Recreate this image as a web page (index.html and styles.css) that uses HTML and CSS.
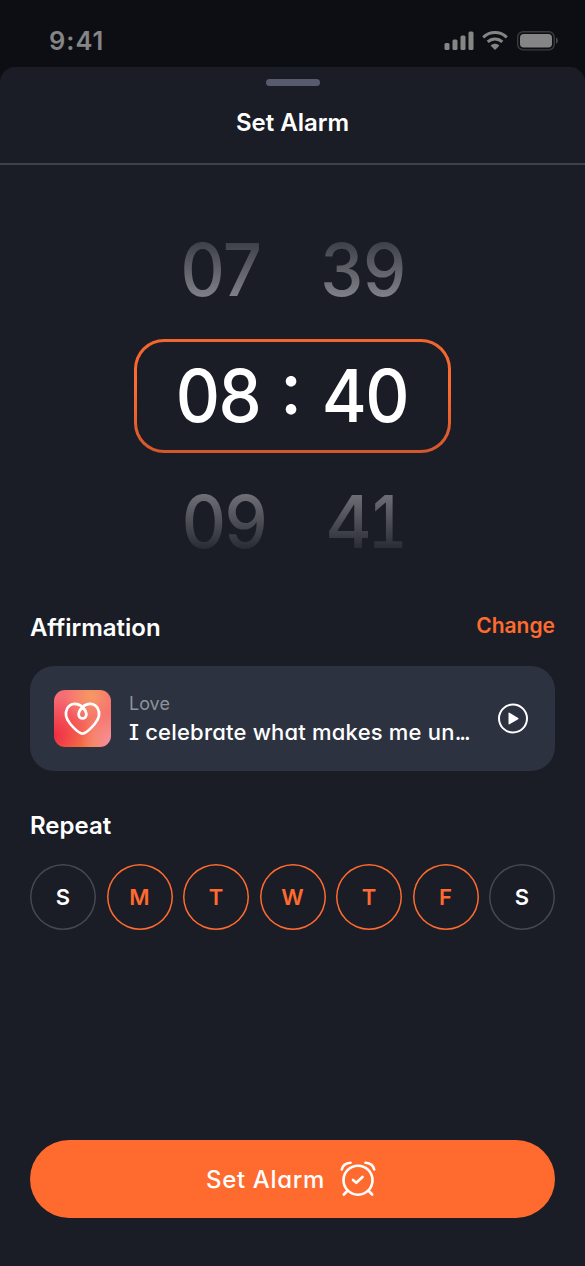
FILE: index.html
```html
<!DOCTYPE html>
<html lang="en">
<head>
<meta charset="utf-8">
<title>Set Alarm</title>
<link rel="stylesheet" href="styles.css">
</head>
<body>
<div class="phone">
  <header class="status">
    <span class="clock">9:41</span>
    <svg class="status-icons" width="116" height="22" viewBox="0 0 116 22">
      <g fill="#858585">
        <rect x="1.5" y="13" width="5" height="7" rx="1.5"/>
        <rect x="9.5" y="9.5" width="5" height="10.5" rx="1.5"/>
        <rect x="17.5" y="5.5" width="5" height="14.5" rx="1.5"/>
        <rect x="25.5" y="1.5" width="5" height="18.5" rx="1.5"/>
        <path d="M52 13.8c1.500 0 2.900.5 4 1.500.3.200.3.500 0 .8l-3.500 3.500c-.3.300-.7.300-1 0L48 16.100c-.3-.3-.3-.6 0-.8 1.100-1 2.500-1.500 4-1.500z"/>
      </g>
      <g fill="none" stroke="#858585" stroke-width="3">
        <path d="M40.200 7.300a17 17 0 0 1 23.600 0"/>
        <path d="M44.700 11.900a10.500 10.500 0 0 1 14.600 0"/>
      </g>
      <rect x="74.700" y="1.700" width="36.500" height="18.200" rx="5.500" fill="none" stroke="#3a3b3f" stroke-width="1.400"/>
      <rect x="77" y="4" width="32" height="13.500" rx="3.800" fill="#858585"/>
      <path d="M113 7.600c2.600 1.200 2.600 5 0 6.200z" fill="#45464a"/>
    </svg>
  </header>
  <main class="sheet">
    <div class="sheet-head">
      <div class="grabber"></div>
      <h1 class="title">Set Alarm</h1>
    </div>
    <section class="picker">
      <div class="row above"><span class="num">07</span><span class="colon"></span><span class="num">39</span></div>
      <div class="row selected"><span class="num">08</span><span class="colon">:</span><span class="num">40</span></div>
      <div class="row below"><span class="num">09</span><span class="colon"></span><span class="pair"><span class="num">4</span><span class="num footed">1</span></span></div>
    </section>
    <section class="affirmation">
      <div class="section-head"><h2>Affirmation</h2><a class="change">Change</a></div>
      <div class="card">
        <div class="cover">
          <svg width="57" height="57" viewBox="0 0 57 57" fill="none" stroke="#fff" stroke-width="2.700" stroke-linecap="round">
            <path d="M28.500 17C24 12.500 16.500 12.700 13.400 18.200C10.500 23.500 12.500 29.500 16.300 34C20 38.400 24 42 27 43.300Q28.500 44 30 43.300C33 42 37 38.400 40.700 34C44.500 29.500 46.500 23.500 43.600 18.200C40.500 12.700 33 12.500 28.500 17C25.500 20.300 24.200 23 24.800 25.500C25.800 29.400 31.200 29.400 32.200 25.500C32.800 23 31.500 20.300 28.500 17Z"/>
          </svg>
        </div>
        <div class="text"><span class="genre">Love</span><span class="quote">I celebrate what makes me un<span class="dots">...</span></span></div>
        <svg class="play" width="32" height="32" viewBox="0 0 32 32"><circle cx="16" cy="15.500" r="14" fill="none" stroke="#fff" stroke-width="2"/><path d="M11.500 10.200v10.600q0 1 1 .5l8.700-5q1-.7 0-1.400l-8.700-5.200q-1-.5-1 .5z" fill="#fff"/></svg>
      </div>
    </section>
    <section class="repeat">
      <h2>Repeat</h2>
      <div class="days">
        <span class="day">S</span><span class="day on">M</span><span class="day on">T</span><span class="day on">W</span><span class="day on">T</span><span class="day on">F</span><span class="day">S</span>
      </div>
    </section>
    <div class="cta"><span>Set Alarm</span>
      <svg width="36" height="36" viewBox="0 0 36 36" fill="none" stroke="#fff" stroke-width="2.600" stroke-linecap="round" stroke-linejoin="round">
        <circle cx="18" cy="19.200" r="14.500"/><path d="M13 19l3.300 2.800 6.200-5.800M6.800 30.500l-3 3M29.200 30.500l3 3M1.800 8.500Q3 2.500 10.500 1.800M34.200 8.500Q33 2.500 25.500 1.800"/>
      </svg>
    </div>
  </main>
</div>
</body>
</html>
```
FILE: styles.css
```css
* { box-sizing: border-box; }
body { margin: 0; background: #0d0e13; color: #fff; font-family: Inter, "Liberation Sans", sans-serif; }
h1, h2 { margin: 0; font-size: 24px; line-height: 32px; font-weight: 600; }
.phone { height: 1266px; display: flex; flex-direction: column; overflow: hidden; }
.status { height: 67px; padding: 14px 26px 0 49px; display: flex; align-items: center; justify-content: space-between; flex: none; }
.clock { font-size: 25.500px; font-weight: 600; letter-spacing: 1px; color: #858585; }
.sheet { flex: 1; background: #1a1c26; border-radius: 15px 15px 0 0; display: flex; flex-direction: column; }
.sheet-head { height: 98px; flex: none; border-bottom: 2px solid #3e424f; display: flex; flex-direction: column; align-items: center; padding-top: 12px; }
.grabber { width: 54px; height: 7px; border-radius: 4px; background: #575b6d; }
.title { margin-top: 21px; }
.picker { height: 447px; padding-top: 48px; display: flex; flex-direction: column; align-items: center; }
.row { width: 317px; height: 114px; margin-bottom: 12px; display: grid; grid-template-columns: 96px 51px 96px; justify-content: center; align-items: center; text-align: center; font-size: 73px; line-height: 90px; font-weight: 500; letter-spacing: -1.500px; }
.num { transform: scaleX(.94); }
.selected { padding-right: 3px; background: linear-gradient(#1a1c26, #1a1c26) padding-box, linear-gradient(#f2652f, #ff6b2f 40%, #d3562c) border-box; border: 3px solid transparent; border-radius: 30px; }
.colon { font-feature-settings: "case"; letter-spacing: 0; }
.above { grid-template-columns: 96px 46px 96px; padding-right: 2px; letter-spacing: -.5px; }
.above .num { background: linear-gradient(#343640 10%, #8b8c92 90%); -webkit-background-clip: text; background-clip: text; color: transparent; }
.below .num { background: linear-gradient(#797a80 10%, #1e202a 90%); -webkit-background-clip: text; background-clip: text; color: transparent; }
.below { grid-template-columns: 96px 44px 96px; padding-left: 3px; }
.pair { display: flex; padding-left: 9px; letter-spacing: -4.500px; }
.pair .num { transform: none; }
.pair .footed { font-feature-settings: "tnum"; transform: scaleX(.83); transform-origin: left; }
.affirmation { padding: 0 30px; }
.section-head { height: 30px; display: flex; justify-content: space-between; align-items: flex-start; }
.change { color: #ff6b2f; font-size: 21px; line-height: 28px; font-weight: 600; }
.card { height: 105px; margin-top: 24px; padding: 24px; border-radius: 24px; background: #2c323f; display: flex; align-items: center; }
.cover { width: 57px; height: 57px; border-radius: 11px; overflow: hidden; background: radial-gradient(circle at 65% 10%, #f69a61, transparent 42%), radial-gradient(circle at 100% 90%, #f78d9f, transparent 40%), radial-gradient(circle at 0 80%, #ef2b46, transparent 55%), linear-gradient(0deg, #f6853d, #f66e74 65%); }
.cover svg { display: block; }
.text { flex: 1; margin-left: 18px; display: flex; flex-direction: column; white-space: nowrap; }
.genre { color: #8f929b; font-size: 18px; line-height: 26px; }
.quote { font-size: 22px; line-height: 30px; font-weight: 500; letter-spacing: .2px; font-feature-settings: "cv11", "cv08"; }
.dots { letter-spacing: -2px; }
.play { flex: none; margin-right: 2px; }
.repeat { padding: 39px 30px 0; }
.days { display: flex; justify-content: space-between; margin-top: 22px; }
.day { width: 66px; height: 66px; box-shadow: inset 0 0 0 1.500px #454854; border-radius: 50%; display: flex; align-items: center; justify-content: center; font-size: 22px; font-weight: 600; }
.on { box-shadow: inset 0 0 0 1.500px #ff6b2f; color: #ff6b2f; }
.cta { margin: auto 30px 48px; padding-right: 3px; height: 78px; border-radius: 39px; background: #ff6b2f; display: flex; align-items: center; justify-content: center; gap: 15px; font-size: 24px; font-weight: 500; letter-spacing: .65px; font-feature-settings: "cv11"; }
```
